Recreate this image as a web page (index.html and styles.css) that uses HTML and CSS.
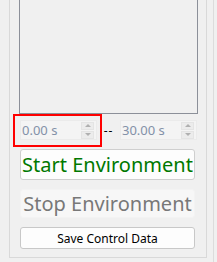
FILE: index.html
```html
<!DOCTYPE html>
<html lang="en">
<head>
  <meta charset="UTF-8">
  <title>Environment Control</title>
  <link rel="stylesheet" href="styles.css">
</head>
<body>
  <div class="layout">
    <div class="group">
      <!-- plot area -->
      <div class="plot"></div>

      <!-- time range -->
      <div class="range">
        <div class="spin">
          <span class="spin-value">0.00 s</span>
          <span class="spin-arrows">
            <span class="arrow up"></span>
            <span class="arrow down"></span>
          </span>
        </div>
        <span class="dash">--</span>
        <div class="spin">
          <span class="spin-value">30.00 s</span>
          <span class="spin-arrows">
            <span class="arrow up"></span>
            <span class="arrow down"></span>
          </span>
        </div>
        <div class="highlight"></div>
      </div>

      <button class="btn btn-big btn-start">Start Environment</button>
      <button class="btn btn-big btn-stop" disabled>Stop Environment</button>
      <button class="btn btn-small">Save Control Data</button>
    </div>
    <div class="side"></div>
  </div>
</body>
</html>
```

FILE: styles.css
```css
* {
  box-sizing: border-box;
  margin: 0;
  padding: 0;
}

body {
  background: #f0f0f0;
  width: 217px;
  height: 262px;
  overflow: hidden;
  font-family: "Noto Sans", "Open Sans", sans-serif;
}

.layout {
  display: flex;
  height: 262px;
}

.group {
  margin-left: 9px;
  width: 198px;
  height: 258px;
  border: 1px solid #d9d9d9;
  border-top: none;
  padding-left: 9px;
  display: flex;
  flex-direction: column;
}

.side {
  margin-left: 6px;
  width: 1px;
  height: 262px;
  background: #dcdcdc;
}

.plot {
  width: 179px;
  height: 114px;
  border: 1px solid #8c9099;
  border-top: none;
}

.range {
  position: relative;
  display: flex;
  align-items: center;
  margin-top: 6px;
  margin-left: 1px;
  height: 20px;
}

.spin {
  display: flex;
  align-items: center;
  width: 77px;
  height: 20px;
  background: #f4f4f4;
  border: 1px solid #ebebeb;
  padding-left: 1px;
}

.spin-value {
  flex: 1;
  font-size: 13px;
  color: #8391a8;
}

.spin-arrows {
  display: flex;
  flex-direction: column;
  gap: 1px;
  margin-right: 2px;
  width: 13px;
}

.arrow {
  height: 8px;
  background: #ececec;
  border: 1px solid #e4e4e4;
  display: flex;
  justify-content: center;
  align-items: center;
}

.arrow::after {
  content: "";
  border-left: 3px solid transparent;
  border-right: 3px solid transparent;
}

.arrow.up::after {
  border-bottom: 3px solid #b0b0b0;
}

.arrow.down::after {
  border-top: 3px solid #b0b0b0;
}

.dash {
  width: 23px;
  text-align: center;
  font-size: 12px;
  letter-spacing: 1px;
  color: #000;
}

.highlight {
  position: absolute;
  left: -7px;
  top: -6px;
  width: 89px;
  height: 33px;
  border: 2px solid #ff0000;
}

.btn {
  margin-left: 1px;
  width: 175px;
  font-family: inherit;
  border-radius: 3px;
}

.btn-big {
  font-size: 20px;
}

.btn-start {
  margin-top: 9px;
  height: 31px;
  background: #fdfdfd;
  border: 1px solid #cfcfcf;
  color: #007800;
}

.btn-stop {
  margin-top: 9px;
  height: 29px;
  background: #f7f7f7;
  border: 1px solid #f3f3f3;
  color: #787878;
}

.btn-small {
  margin-top: 9px;
  height: 22px;
  background: #fdfdfd;
  border: 1px solid #c8c8c8;
  font-size: 12px;
  color: #000;
}
```
